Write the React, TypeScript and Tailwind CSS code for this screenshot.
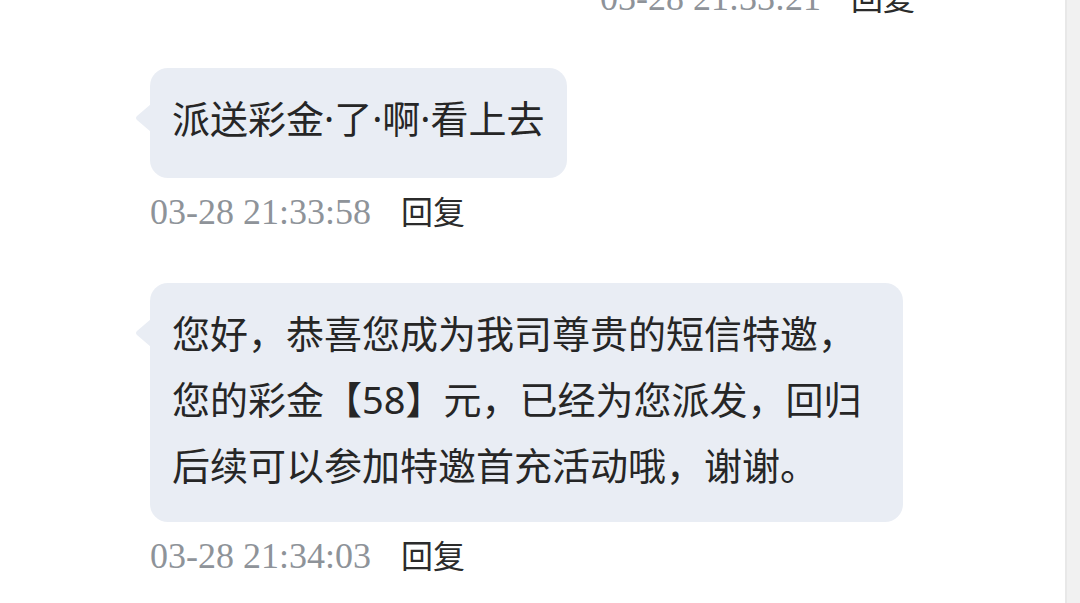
const cjk = { fontFamily: "'Noto Sans', 'Noto Sans CJK SC', sans-serif" };
const serif = { fontFamily: "'Liberation Serif', 'Noto Sans CJK SC', serif" };

function Tail({ top }: { top: number }) {
  return (
    <svg
      className="absolute left-[-15px]"
      style={{ top }}
      width="16"
      height="28"
      viewBox="0 0 16 28"
    >
      <path d="M16 0 L2 12 Q0 14 2 16 L16 28 Z" fill="#e9edf4" />
    </svg>
  );
}

function Meta({ time, className }: { time: string; className?: string }) {
  return (
    <div className={"flex items-center h-[40px] " + (className ?? "")}>
      <span className="text-[36px] leading-[40px] text-[#8e9399]" style={serif}>
        {time}
      </span>
      <span className="ml-[30px] text-[32px] leading-[40px] text-[#2b2b2b]" style={cjk}>
        回复
      </span>
    </div>
  );
}

function Bubble({ lines, className }: { lines: string[]; className?: string }) {
  return (
    <div
      className={
        "relative self-start rounded-[18px] bg-[#e9edf4] pl-[22px] pr-[22px] pt-[17px] text-[38px] leading-[66px] text-[#262626] whitespace-nowrap " +
        (className ?? "")
      }
      style={cjk}
    >
      <Tail top={36} />
      {lines.map((l) => (
        <div key={l}>{l}</div>
      ))}
    </div>
  );
}

export default function App() {
  return (
    <div className="flex h-[603px] w-full overflow-hidden bg-white">
      <main className="flex-1 flex flex-col px-[150px]">
        <Meta time="03-28 21:33:21" className="self-end mt-[-22px]" />

        <div className="mt-[50px] flex flex-col">
          <Bubble className="pb-[27px]" lines={["派送彩金·了·啊·看上去"]} />
          <Meta time="03-28 21:33:58" className="mt-[14px]" />
        </div>

        <div className="mt-[51px] flex flex-col">
          <Bubble
            className="w-[753px] pb-[24px]"
            lines={[
              "您好，恭喜您成为我司尊贵的短信特邀，",
              "您的彩金【58】元，已经为您派发，回归",
              "后续可以参加特邀首充活动哦，谢谢。",
            ]}
          />
          <Meta time="03-28 21:34:03" className="mt-[14px]" />
        </div>
      </main>
      <div className="w-[15px] h-full bg-[#f1f1f1] border-l-2 border-[#e8e8e8]" />
    </div>
  );
}
